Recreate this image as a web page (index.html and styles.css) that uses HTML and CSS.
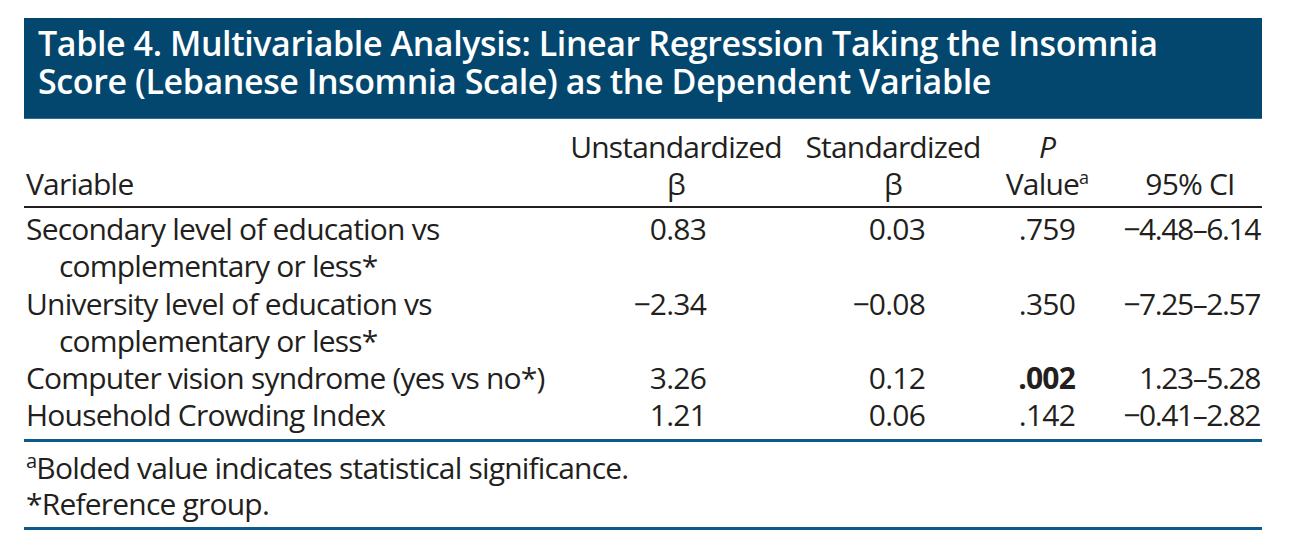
FILE: index.html
```html
<!DOCTYPE html>
<html>
<head>
<meta charset="utf-8">
<link rel="stylesheet" href="styles.css">
</head>
<body>
<div class="page">
  <div class="title">Table 4. Multivariable Analysis: Linear Regression Taking the Insomnia<br>Score (Lebanese Insomnia Scale) as the Dependent Variable</div>
  <table class="tbl">
    <thead>
      <tr>
        <th class="c1">Variable</th>
        <th class="c2">Unstandardized<br>β</th>
        <th class="c3">Standardized<br>β</th>
        <th class="c4"><i>P</i><br>Value<sup>a</sup></th>
        <th class="c5">95% CI</th>
      </tr>
    </thead>
    <tbody>
      <tr>
        <td class="c1">Secondary level of education vs<br><span class="ind">complementary or less*</span></td>
        <td class="c2">0.83</td>
        <td class="c3">0.03</td>
        <td class="c4">.759</td>
        <td class="c5">−4.48–6.14</td>
      </tr>
      <tr>
        <td class="c1">University level of education vs<br><span class="ind">complementary or less*</span></td>
        <td class="c2">−2.34</td>
        <td class="c3">−0.08</td>
        <td class="c4">.350</td>
        <td class="c5">−7.25–2.57</td>
      </tr>
      <tr>
        <td class="c1">Computer vision syndrome (yes vs no*)</td>
        <td class="c2">3.26</td>
        <td class="c3">0.12</td>
        <td class="c4"><b>.002</b></td>
        <td class="c5">1.23–5.28</td>
      </tr>
      <tr class="last">
        <td class="c1">Household Crowding Index</td>
        <td class="c2">1.21</td>
        <td class="c3">0.06</td>
        <td class="c4">.142</td>
        <td class="c5">−0.41–2.82</td>
      </tr>
    </tbody>
  </table>
  <div class="notes">
    <div class="note"><sup class="fn">a</sup>Bolded value indicates statistical significance.</div>
    <div class="note">*Reference group.</div>
  </div>
</div>
</body>
</html>
```

FILE: styles.css
```css
html, body {
  margin: 0;
  padding: 0;
  background: #ffffff;
}
.page {
  width: 1238px;
  margin: 18px 0 0 24px;
  font-family: "Open Sans", "Liberation Sans", sans-serif;
  color: #231f20;
  font-size: 30px;
  letter-spacing: -0.8px;
  line-height: 37px;
}
.title {
  background: #03476f;
  border-bottom: 1px solid #2a6f95;
  color: #ffffff;
  font-weight: 600;
  font-size: 34px;
  letter-spacing: -0.4px;
  line-height: 38px;
  padding: 6px 14px 18px 14px;
}
.tbl {
  width: 1238px;
  border-collapse: collapse;
  table-layout: fixed;
}
.tbl th, .tbl td {
  box-sizing: border-box;
  padding: 0;
  font-weight: normal;
  vertical-align: top;
  white-space: nowrap;
}
.tbl thead th {
  vertical-align: bottom;
  padding-top: 9px;
  padding-bottom: 4px;
  border-bottom: 2px solid #231f20;
}
.tbl tbody td {
  line-height: 37.3px;
}
.tbl tbody tr:first-child td {
  padding-top: 2px;
}
.tbl tr.last td {
  padding-bottom: 5px;
  border-bottom: 3px solid #0b5a8a;
}
.c1 { width: 539px; text-align: left; }
.c2 { width: 226px; }
.c3 { width: 208px; }
.c4 { width: 121px; }
.c5 { width: 144px; }
th.c1 { text-align: left; padding-left: 2px; }
td.c1 { padding-left: 2px; }
th.c2, th.c3, th.c5 { text-align: center; }
th.c4 { text-align: center; padding-right: 21px; }
td.c2 { text-align: right; padding-right: 83px; }
td.c3 { text-align: right; padding-right: 72px; }
td.c4 { text-align: right; padding-right: 43px; }
td.c5 { text-align: right; padding-right: 2px; letter-spacing: -1.4px; }
.ind { padding-left: 33px; }
sup {
  font-size: 18px;
  line-height: 0;
  vertical-align: 11px;
}
sup.fn {
  font-size: 20px;
  vertical-align: 11px;
}
.notes {
  border-bottom: 3px solid #0b5a8a;
  padding: 8px 0 5px 2px;
  line-height: 36px;
}
```
